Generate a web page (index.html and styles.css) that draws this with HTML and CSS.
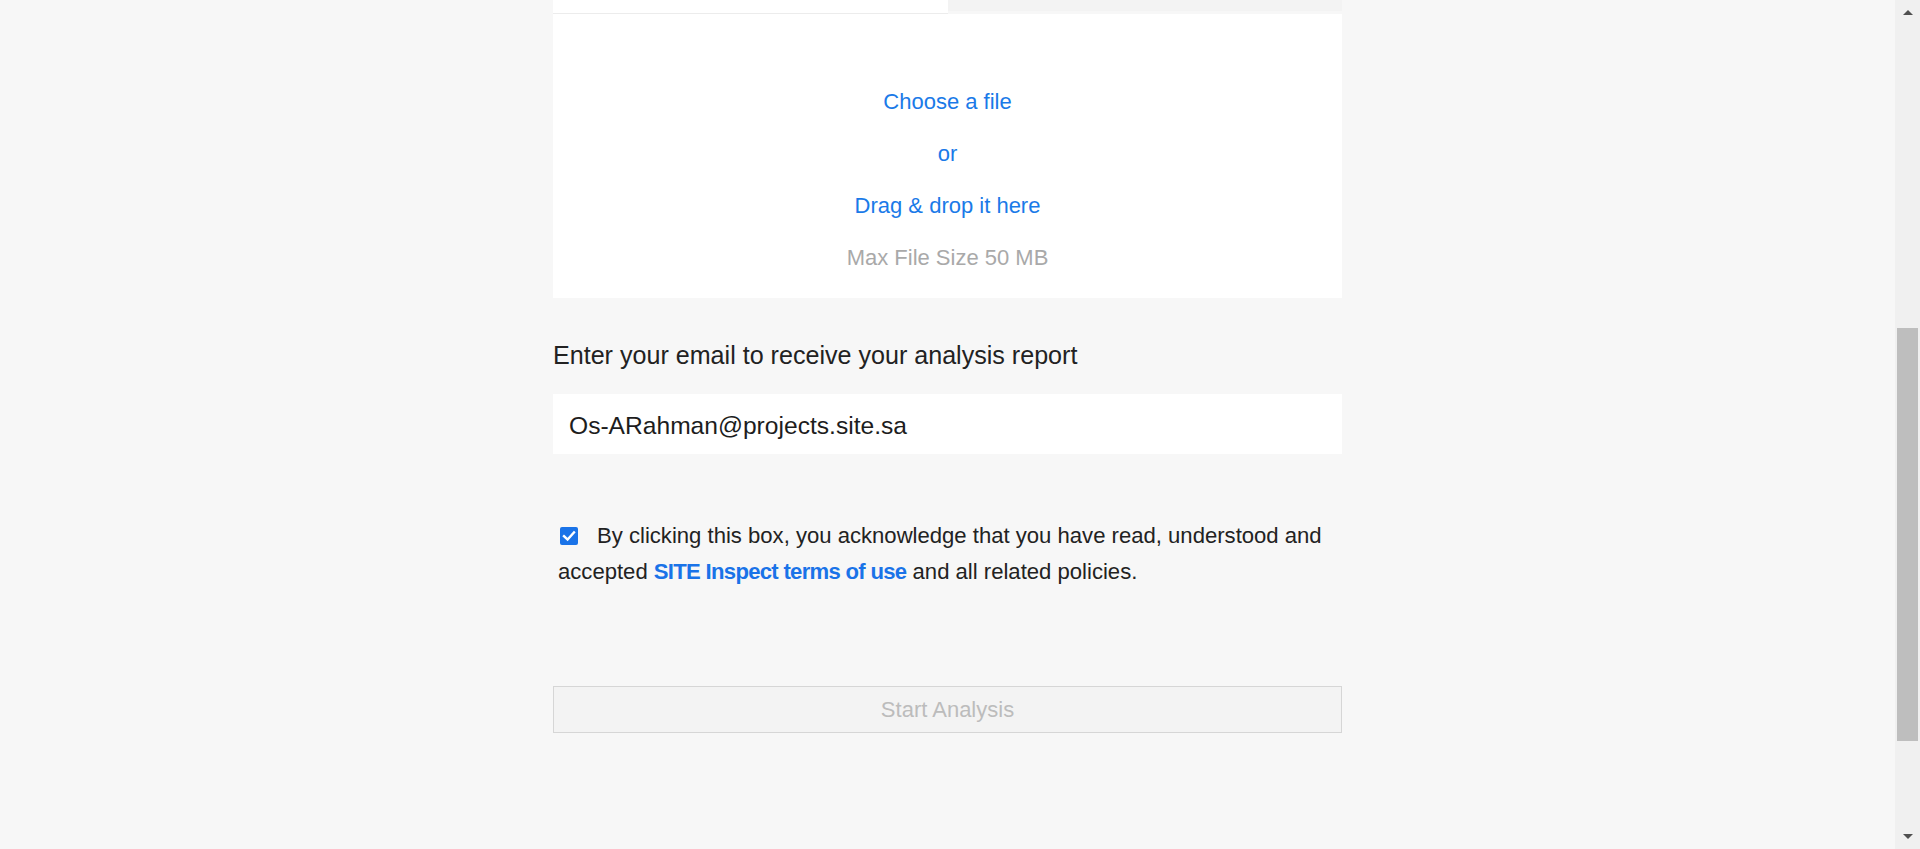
FILE: index.html
```html
<!DOCTYPE html>
<html lang="en">
<head>
<meta charset="utf-8">
<title>SITE Inspect</title>
<link rel="stylesheet" href="styles.css">
</head>
<body>
<div class="page">
  <main class="main">
    <div class="container">
      <div class="tabs">
        <div class="tab tab-active"></div>
        <div class="tab tab-inactive"></div>
      </div>
      <div class="upload">
        <a class="upload-line upload-link">Choose a file</a>
        <span class="upload-line upload-link">or</span>
        <a class="upload-line upload-link">Drag &amp; drop it here</a>
        <span class="upload-line upload-note">Max File Size 50 MB</span>
      </div>
      <label class="label" for="email">Enter your email to receive your analysis report</label>
      <div class="input">Os-ARahman@projects.site.sa</div>
      <p class="terms">
        <span class="checkbox"><svg width="14" height="12" viewBox="0 0 14 12"><path d="M2 6.2 L5.6 9.6 L12 2.4" fill="none" stroke="#fff" stroke-width="2.4" stroke-linecap="square"/></svg></span>By clicking this box, you acknowledge that you have read, understood and accepted <a class="terms-link">SITE Inspect terms of use</a> and all related policies.
      </p>
      <div class="button">Start Analysis</div>
    </div>
  </main>
  <div class="scrollbar">
    <div class="arrow arrow-up"></div>
    <div class="track">
      <div class="thumb"></div>
    </div>
    <div class="arrow arrow-down"></div>
  </div>
</div>
</body>
</html>
```

FILE: styles.css
```css
html, body {
  margin: 0;
  padding: 0;
  height: 100%;
  overflow: hidden;
}
body {
  background: #f7f7f7;
  font-family: "Liberation Sans", Arial, sans-serif;
  color: #222;
}
.page {
  display: flex;
  height: 849px;
}
.main {
  flex: 1;
  min-width: 0;
}
.container {
  width: 789px;
  margin: 0 auto;
  display: flex;
  flex-direction: column;
}
.tabs {
  display: flex;
  height: 14px;
}
.tab {
  flex: 1;
}
.tab-active {
  background: #fff;
  height: 13px;
  border-bottom: 1px solid #ececec;
}
.tab-inactive {
  background: #f3f3f3;
  height: 11px;
}
.upload {
  background: #fff;
  height: 284px;
  box-sizing: border-box;
  padding-top: 62px;
  display: flex;
  flex-direction: column;
  align-items: center;
}
.upload-line {
  display: block;
  height: 52px;
  line-height: 52px;
  font-size: 22px;
}
.upload-link {
  color: #1a7ae8;
  cursor: pointer;
}
.upload-note {
  color: #a9a9a9;
}
.label {
  display: block;
  margin-top: 42px;
  font-size: 25.1px;
  line-height: 30px;
  color: #222;
}
.input {
  margin-top: 24px;
  height: 60px;
  background: #fff;
  box-sizing: border-box;
  padding-left: 16px;
  padding-top: 3px;
  display: flex;
  align-items: center;
  font-size: 24.6px;
  color: #1d1d1d;
}
.terms {
  margin: 64px 0 0;
  padding-left: 5px;
  font-size: 22.1px;
  line-height: 36px;
  color: #222;
}
.checkbox {
  display: inline-flex;
  align-items: center;
  justify-content: center;
  width: 18px;
  height: 18px;
  background: #1a73e8;
  border-radius: 2px;
  vertical-align: 1px;
  margin-left: 2px;
  margin-right: 19px;
}
.terms-link {
  color: #1a73e8;
  font-weight: bold;
  letter-spacing: -0.7px;
  cursor: pointer;
}
.button {
  margin-top: 96px;
  height: 47px;
  box-sizing: border-box;
  border: 1px solid #d6d6d6;
  background: #f3f3f3;
  color: #bcbcbc;
  font-size: 22px;
  display: flex;
  align-items: center;
  justify-content: center;
}
.scrollbar {
  width: 25px;
  background: #f0f0f0;
  display: flex;
  flex-direction: column;
  align-items: center;
}
.arrow {
  width: 0;
  height: 0;
  border-left: 5px solid transparent;
  border-right: 5px solid transparent;
}
.arrow-up {
  margin-top: 10px;
  border-bottom: 5px solid #505050;
}
.arrow-down {
  margin-bottom: 10px;
  border-top: 5px solid #505050;
}
.track {
  flex: 1;
  align-self: stretch;
  display: flex;
  flex-direction: column;
  padding-top: 313px;
}
.thumb {
  margin-left: 2px;
  width: 21px;
  height: 413px;
  background: #bebebe;
}
```
